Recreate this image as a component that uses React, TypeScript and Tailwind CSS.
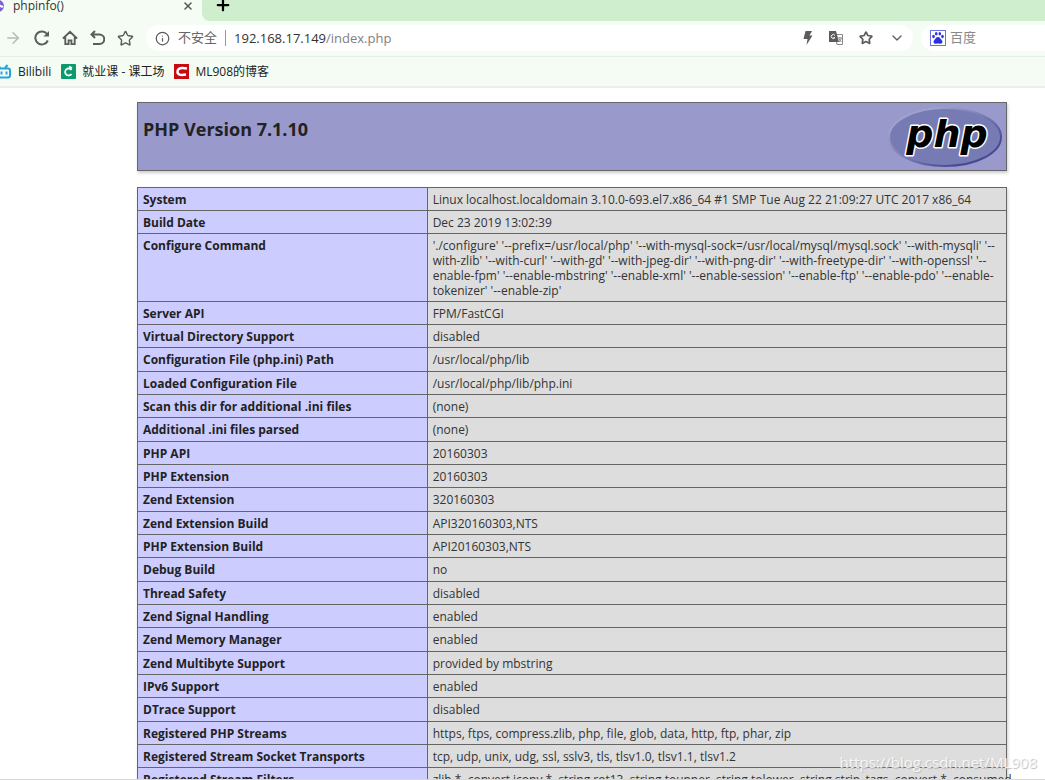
import { useState } from 'react';
import { X, Plus, ArrowRight, Star, Info, ChevronDown } from 'lucide-react';

const rows: [string, string][] = [
  ['System', 'Linux localhost.localdomain 3.10.0-693.el7.x86_64 #1 SMP Tue Aug 22 21:09:27 UTC 2017 x86_64'],
  ['Build Date', 'Dec 23 2019 13:02:39'],
  [
    'Configure Command',
    "'./configure' '--prefix=/usr/local/php' '--with-mysql-sock=/usr/local/mysql/mysql.sock' '--with-mysqli' '--\nwith-zlib' '--with-curl' '--with-gd' '--with-jpeg-dir' '--with-png-dir' '--with-freetype-dir' '--with-openssl' '--\nenable-fpm' '--enable-mbstring' '--enable-xml' '--enable-session' '--enable-ftp' '--enable-pdo' '--enable-\ntokenizer' '--enable-zip'",
  ],
  ['Server API', 'FPM/FastCGI'],
  ['Virtual Directory Support', 'disabled'],
  ['Configuration File (php.ini) Path', '/usr/local/php/lib'],
  ['Loaded Configuration File', '/usr/local/php/lib/php.ini'],
  ['Scan this dir for additional .ini files', '(none)'],
  ['Additional .ini files parsed', '(none)'],
  ['PHP API', '20160303'],
  ['PHP Extension', '20160303'],
  ['Zend Extension', '320160303'],
  ['Zend Extension Build', 'API320160303,NTS'],
  ['PHP Extension Build', 'API20160303,NTS'],
  ['Debug Build', 'no'],
  ['Thread Safety', 'disabled'],
  ['Zend Signal Handling', 'enabled'],
  ['Zend Memory Manager', 'enabled'],
  ['Zend Multibyte Support', 'provided by mbstring'],
  ['IPv6 Support', 'enabled'],
  ['DTrace Support', 'disabled'],
  ['Registered PHP Streams', 'https, ftps, compress.zlib, php, file, glob, data, http, ftp, phar, zip'],
  ['Registered Stream Socket Transports', 'tcp, udp, unix, udg, ssl, sslv3, tls, tlsv1.0, tlsv1.1, tlsv1.2'],
  ['Registered Stream Filters', 'zlib.*, convert.iconv.*, string.rot13, string.toupper, string.tolower, string.strip_tags, convert.*, consumed'],
];

function PhpLogo() {
  return (
    <svg width="114" height="62" viewBox="0 0 114 62" role="img" aria-label="PHP logo">
      <defs>
        <linearGradient id="rim" x1="0" y1="0" x2="1" y2="1">
          <stop offset="0.2" stopColor="#9ea2cf" />
          <stop offset="0.5" stopColor="#777bb3" />
          <stop offset="0.8" stopColor="#484893" />
        </linearGradient>
      </defs>
      <ellipse cx="57" cy="31" rx="56" ry="29" fill="#777bb3" stroke="url(#rim)" strokeWidth="2" />
      <text
        x="59"
        y="41"
        textAnchor="middle"
        className="font-['DejaVu_Sans'] text-[38px] font-bold italic"
        fill="#000"
        stroke="#fff"
        strokeWidth="3"
        strokeLinejoin="round"
        paintOrder="stroke"
      >
        php
      </text>
    </svg>
  );
}

function TabBar() {
  return (
    <div className="flex h-[21px] bg-[#cfeecd]">
      <div className="flex w-[202px] items-start bg-[#f4fcf4]">
        <svg width="5" height="12" viewBox="0 0 5 12" className="shrink-0">
          <circle cx="-2" cy="6" r="6" fill="#7c5cdb" />
          <path d="M0 5c1 2 2 2 3 1" stroke="#fff" strokeWidth="2" fill="none" />
        </svg>
        <span className="ml-2 text-xs leading-3 text-[#333]">phpinfo()</span>
        <button aria-label="Close tab" className="mr-2 ml-auto text-[#555]">
          <X size={12} strokeWidth={3} />
        </button>
      </div>
      <div className="flex-1 bg-[#f4fcf4]">
        <div className="h-full rounded-bl-lg bg-[#cfeecd] pl-3">
          <button aria-label="New tab" className="block text-black">
            <Plus size={18} strokeWidth={3} className="-mt-1" />
          </button>
        </div>
      </div>
    </div>
  );
}

function Toolbar() {
  const [url, setUrl] = useState('192.168.17.149/index.php');
  const slash = url.indexOf('/');

  return (
    <div className="flex h-9 items-center border-b border-[#e8efe8] pb-px text-[#5a5d5a]">
      <div className="flex w-[146px] shrink-0 items-center gap-3 pl-1">
        <button aria-label="Forward" className="text-[#b5bab5]">
          <ArrowRight size={18} strokeWidth={2} />
        </button>
        <button aria-label="Reload">
          <svg width="16" height="16" viewBox="0 0 16 16" fill="none" stroke="currentColor" strokeWidth="2">
            <path d="M13.8 10.5A6.5 6.5 0 1 1 13 4" />
            <path d="M15 1v5.500H9.500z" fill="currentColor" stroke="none" />
          </svg>
        </button>
        <button aria-label="Home">
          <svg width="16" height="16" viewBox="0 0 17 16" fill="none" stroke="currentColor" strokeWidth="2">
            <path d="M1 8.500 8.500 1.500 16 8.500M3.500 7v7.500h3.500v-4h3v4h3.500V7" />
          </svg>
        </button>
        <button aria-label="Undo">
          <svg width="15" height="16" viewBox="0 0 15 16" fill="none" stroke="currentColor" strokeWidth="2">
            <path d="M5 1 1.500 4.500 5 8M2 4.500h7.500a4.500 4.500 0 0 1 0 9.500H3" />
          </svg>
        </button>
        <button aria-label="Favorites">
          <Star size={17} strokeWidth={2} />
        </button>
      </div>
      <div className="flex h-[26px] flex-1 items-center rounded-full bg-white px-2">
        <Info size={15} strokeWidth={2} className="ml-px shrink-0" />
        <span className="ml-2 text-[13px] whitespace-nowrap text-[#666]">不安全</span>
        <span className="mx-2 h-4 w-px shrink-0 bg-[#999]" />
        <label className="relative flex-1 text-[13px] leading-5">
          <span aria-hidden="true" className="text-[#333]">
            {slash < 0 ? url : url.slice(0, slash)}
            <span className="text-[#808080]">{slash < 0 ? '' : url.slice(slash)}</span>
          </span>
          <input
            aria-label="Address"
            value={url}
            onChange={(e) => setUrl(e.target.value)}
            className="absolute inset-0 w-full bg-transparent text-transparent caret-black outline-none"
          />
        </label>
        <div className="flex items-center gap-4">
          <button aria-label="Speed mode">
            <svg width="10" height="14" viewBox="0 0 10 14" fill="currentColor">
              <path d="M2.500 0H9L6.500 4.500H9.500L3.500 14 4.500 8H.5z" />
            </svg>
          </button>
          <button aria-label="Translate">
            <svg width="14" height="14" viewBox="0 0 14 14">
              <path d="M6 3.500h7.500v10H8z" fill="#fff" stroke="#888" />
              <path d="M0 0h7l3 11H0z" fill="#5a5d5a" />
              <path d="M6 4.500A2 2 0 1 0 6 6.500H4.500" fill="none" stroke="#fff" />
              <path d="M9 7h4M11 6v1M12.500 7.500 10 11M10 8l2.500 3" fill="none" stroke="#888" />
            </svg>
          </button>
          <button aria-label="Bookmark page">
            <Star size={14} strokeWidth={3} />
          </button>
          <button aria-label="More">
            <ChevronDown size={16} strokeWidth={2} />
          </button>
        </div>
      </div>
      <div className="ml-2 flex h-[26px] w-[124px] shrink-0 items-center gap-1 rounded-l-full bg-white pl-2">
        <svg width="16" height="16" viewBox="0 0 16 16" fill="#2932e1" className="ml-px shrink-0">
          <rect x="0.500" y="0.500" width="15" height="15" fill="#fff" stroke="#6a70e8" />
          <ellipse cx="3.500" cy="6.500" rx="1.300" ry="1.800" />
          <ellipse cx="6.200" cy="3.800" rx="1.300" ry="1.800" />
          <ellipse cx="9.800" cy="3.800" rx="1.300" ry="1.800" />
          <ellipse cx="12.500" cy="6.500" rx="1.300" ry="1.800" />
          <path d="M8 7c2 0 2.500 2 4 3.500 1.200 1.500 0 3.500-2 3.200-1.500-.3-2.500-.3-4 0-2 .3-3.200-1.700-2-3.200C5.500 9 6 7 8 7z" />
        </svg>
        <input
          aria-label="Search"
          placeholder="百度"
          className="w-full min-w-0 bg-transparent text-[13px] outline-none placeholder:text-[#888]"
        />
      </div>
    </div>
  );
}

function BookmarkBar() {
  return (
    <nav className="flex h-[31px] items-center gap-2.5 border-b-2 border-[#ebefeb] text-xs text-[#222]">
      <a href="#bilibili" className="flex items-center gap-1.5">
        <svg width="12" height="16" viewBox="0 0 12 16" fill="none" stroke="#23a5da" strokeWidth="2">
          <path d="M-2 4.500h10a2 2 0 0 1 2 2v5a2 2 0 0 1-2 2H-2M5 4l2.500-3M0 4l-1-2M1.500 7.500v3M6.500 7.500v3" />
        </svg>
        Bilibili
      </a>
      <a href="#kgc" className="flex items-center gap-1.5">
        <svg width="15" height="15" viewBox="0 0 15 15">
          <rect width="15" height="15" rx="1" fill="#0a9b6b" />
          <path d="M10.500 6A3.500 3.500 0 1 0 10.500 10M8 2.500l3 1.500" fill="none" stroke="#fff" strokeWidth="1.800" />
        </svg>
        就业课 - 课工场
      </a>
      <a href="#blog" className="flex items-center gap-1.5">
        <svg width="15" height="15" viewBox="0 0 15 15">
          <rect width="15" height="15" fill="#c70b10" />
          <path d="M13 4.500C5 3 3.500 5 3.500 7.800S6 11.500 12 10.500" fill="none" stroke="#fff" strokeWidth="2.500" />
        </svg>
        ML908的博客
      </a>
    </nav>
  );
}

export default function App() {
  return (
    <div className="relative flex h-screen flex-col overflow-hidden bg-white font-['Open_Sans','Noto_Sans_CJK_SC',sans-serif]">
      <header className="shrink-0 bg-[#f4fcf4]">
        <TabBar />
        <Toolbar />
        <BookmarkBar />
      </header>

      <main className="min-h-0 flex-1 overflow-hidden pt-[14px] pr-[38px] pl-[137px] text-[#222]">
        <div className="flex h-[69px] items-start justify-between border border-[#666] bg-[#9999cc] pr-1 pl-[5px] shadow-[1px_2px_3px_#ccc]">
          <h1 className="mt-[14px] text-lg leading-6 font-bold">PHP Version 7.1.10</h1>
          <div className="mt-[3px]">
            <PhpLogo />
          </div>
        </div>

        <table className="mt-4 w-full table-fixed border-collapse text-xs leading-[15px] shadow-[1px_2px_3px_#ccc]">
          <tbody>
            {rows.map(([name, value]) => (
              <tr key={name} className="h-[23px] nth-[3n]:h-6">
                <th
                  scope="row"
                  className="w-1/3 border border-[#666] bg-[#ccccff] px-[5px] pt-1 pb-[3px] text-left align-top font-bold"
                >
                  {name}
                </th>
                <td className="border border-[#666] bg-[#dddddd] px-[5px] pt-1 pb-[3px] align-top whitespace-pre text-[#333]">
                  {value}
                </td>
              </tr>
            ))}
          </tbody>
        </table>
      </main>

      <footer className="h-px shrink-0 bg-[#d8d8d8]" />
      <span className="absolute right-2 bottom-1.5 text-[15px] leading-6 text-white/80 [text-shadow:1px_1px_1px_#bbb]">
        https://blog.csdn.net/ML908
      </span>
    </div>
  );
}
